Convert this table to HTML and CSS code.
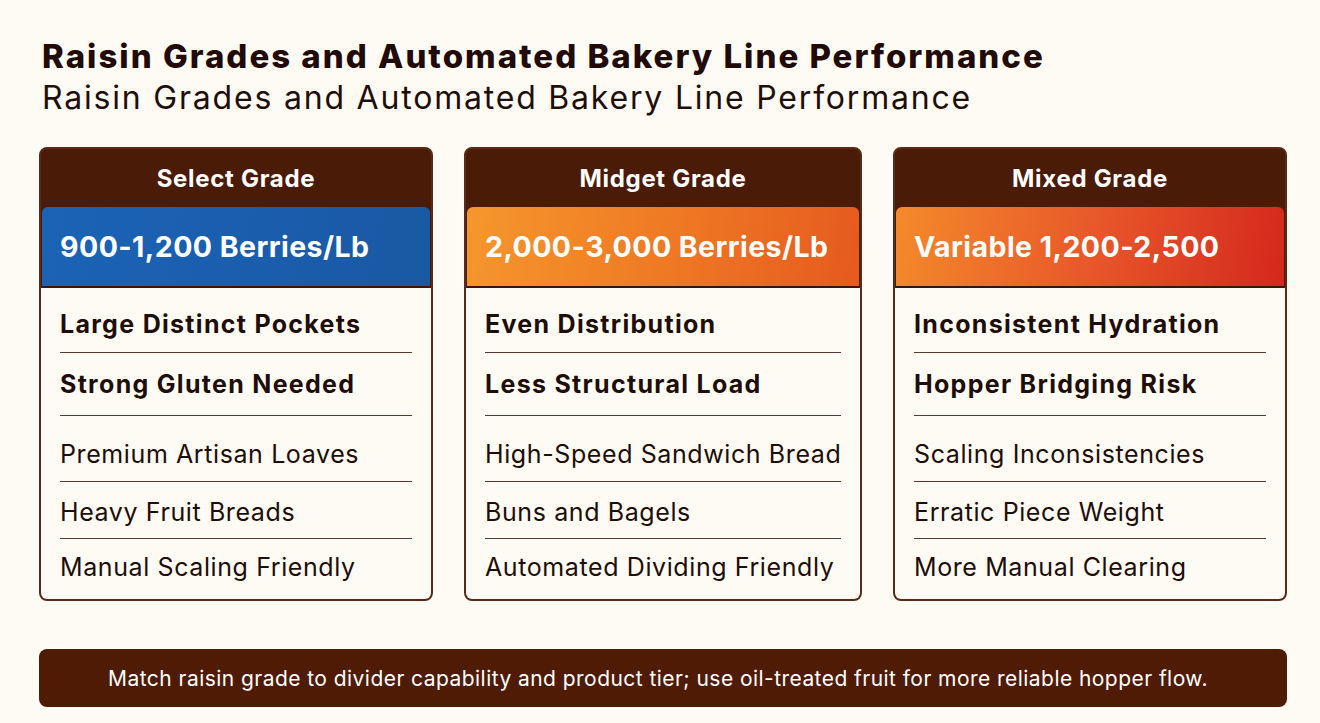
FILE: index.html
```html
<!DOCTYPE html>
<html>
<head>
<meta charset="utf-8">
<link rel="stylesheet" href="styles.css">
</head>
<body>
<div class="page">
  <h1 class="title">Raisin Grades and Automated Bakery Line Performance</h1>
  <h2 class="subtitle">Raisin Grades and Automated Bakery Line Performance</h2>
  <div class="cards">
    <div class="card">
      <div class="card-head">Select Grade</div>
      <div class="band band-blue">900-1,200 Berries/Lb</div>
      <div class="rows">
        <div class="row strong">Large Distinct Pockets</div>
        <div class="row strong">Strong Gluten Needed</div>
        <div class="row">Premium Artisan Loaves</div>
        <div class="row">Heavy Fruit Breads</div>
        <div class="row">Manual Scaling Friendly</div>
      </div>
    </div>
    <div class="card">
      <div class="card-head">Midget Grade</div>
      <div class="band band-orange">2,000-3,000 Berries/Lb</div>
      <div class="rows">
        <div class="row strong">Even Distribution</div>
        <div class="row strong">Less Structural Load</div>
        <div class="row">High-Speed Sandwich Bread</div>
        <div class="row">Buns and Bagels</div>
        <div class="row">Automated Dividing Friendly</div>
      </div>
    </div>
    <div class="card">
      <div class="card-head">Mixed Grade</div>
      <div class="band band-red">Variable 1,200-2,500</div>
      <div class="rows">
        <div class="row strong">Inconsistent Hydration</div>
        <div class="row strong">Hopper Bridging Risk</div>
        <div class="row">Scaling Inconsistencies</div>
        <div class="row">Erratic Piece Weight</div>
        <div class="row">More Manual Clearing</div>
      </div>
    </div>
  </div>
  <div class="footer">Match raisin grade to divider capability and product tier; use oil-treated fruit for more reliable hopper flow.</div>
</div>
</body>
</html>
```

FILE: styles.css
```css
* { box-sizing: border-box; }
html, body { margin: 0; padding: 0; }
body {
  background: #fdfbf3;
  font-family: Inter, "Noto Sans", sans-serif;
  color: #1e0d08;
  width: 1320px;
  height: 723px;
  overflow: hidden;
}
.page {
  padding: 36px 33px 0 39px;
}
.title {
  margin: 0 0 0 3px;
  font-size: 33px;
  font-weight: 800;
  line-height: 40px;
  letter-spacing: 2px;
  color: #210a08;
  white-space: nowrap;
}
.subtitle {
  margin: 2px 0 0 3px;
  font-size: 32px;
  font-weight: 400;
  line-height: 40px;
  letter-spacing: 1.8px;
  color: #1f0e0a;
  white-space: nowrap;
}
.cards {
  display: grid;
  grid-template-columns: 394px 398px 394px;
  column-gap: 31px;
  margin-top: 29px;
}
.card {
  height: 454px;
  border: 2px solid #5a2a18;
  border-radius: 8px;
  background: #4a1b07;
  overflow: hidden;
  display: flex;
  flex-direction: column;
}
.card-head {
  height: 58px;
  display: flex;
  align-items: center;
  justify-content: center;
  color: #fff;
  font-weight: 700;
  font-size: 24px;
  letter-spacing: 0.7px;
}
.band {
  height: 81px;
  margin: 0 1px;
  border-radius: 6px 6px 0 0;
  padding-left: 18px;
  display: flex;
  align-items: center;
  color: #fff;
  font-weight: 700;
  font-size: 28.5px;
  letter-spacing: 0.45px;
  border-bottom: 2px solid #3d1406;
  white-space: nowrap;
}
.band-blue { background: linear-gradient(100deg, #1c63b5 0%, #1a5eae 50%, #1a58a2 100%); }
.band-orange { background: linear-gradient(100deg, #f5972c 0%, #ef7a24 50%, #e55a1e 100%); }
.band-red { background: linear-gradient(100deg, #f48a2a 0%, #e8582a 50%, #d4281d 100%); }
.rows {
  flex: 1;
  background: #fdfbf3;
  padding: 3px 19px 0;
  display: flex;
  flex-direction: column;
}
.row {
  height: 62px;
  display: flex;
  align-items: center;
  font-size: 25px;
  font-weight: 400;
  letter-spacing: 0.6px;
  color: #1e0d08;
  border-bottom: 1.5px solid #5a3a30;
  padding-top: 4px;
  white-space: nowrap;
}
.row:nth-child(2) { height: 63px; padding-top: 0; }
.row:nth-child(3) { height: 66px; padding-top: 10px; }
.row:nth-child(4) { height: 57px; padding-top: 4px; }
.row:last-child { border-bottom: none; flex: 1; padding-top: 0; padding-bottom: 4px; }
.row.strong { font-weight: 700; letter-spacing: 1.3px; }
.footer {
  margin-top: 48px;
  height: 58px;
  width: 1248px;
  background: #4f1b05;
  border-radius: 8px;
  color: #fff;
  font-size: 21px;
  letter-spacing: 0.45px;
  padding-right: 10px;
  display: flex;
  align-items: center;
  justify-content: center;
  white-space: nowrap;
}
```
